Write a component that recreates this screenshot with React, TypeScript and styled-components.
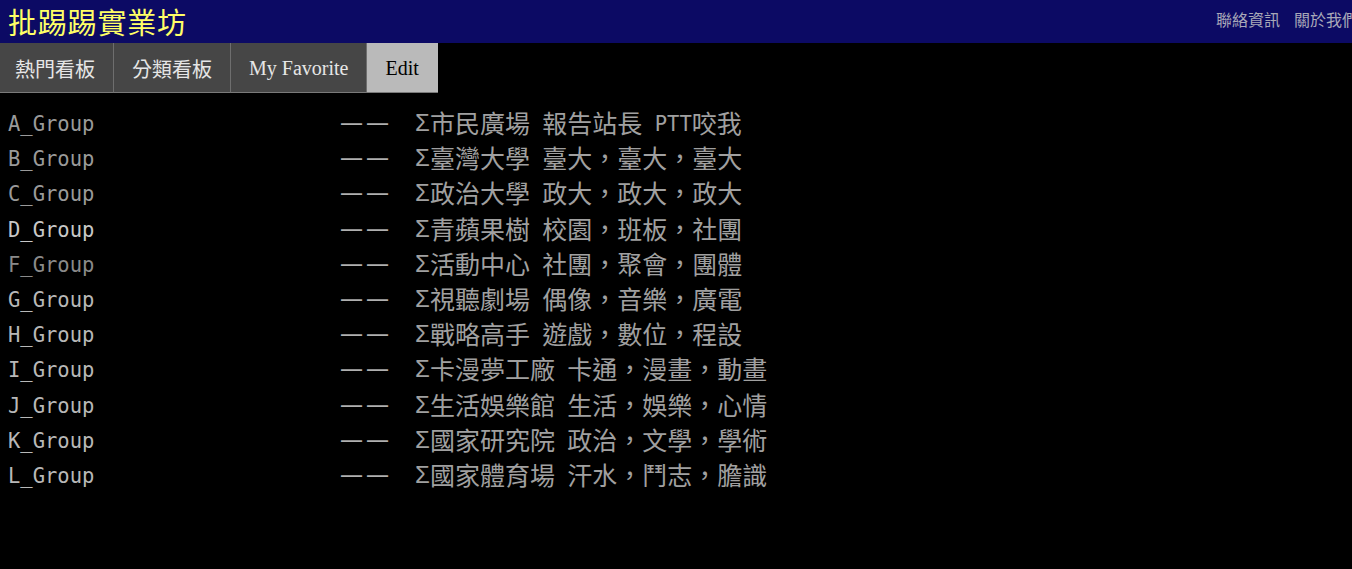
import React from 'react';
import styled, {createGlobalStyle} from 'styled-components';

const Global = createGlobalStyle`
  html, body {
    margin: 0;
    padding: 0;
    background: #000;
    overflow: hidden;
  }
`;

interface Board {
  name : string;
  desc : string;
  color : string;
}

const boards : Board[] = [
  {name: 'A_Group', desc: '市民廣場 報告站長 PTT咬我', color: '#9a9a9a'},
  {name: 'B_Group', desc: '臺灣大學 臺大，臺大，臺大', color: '#9a9a9a'},
  {name: 'C_Group', desc: '政治大學 政大，政大，政大', color: '#9a9a9a'},
  {name: 'D_Group', desc: '青蘋果樹 校園，班板，社團', color: '#c8c8c8'},
  {name: 'F_Group', desc: '活動中心 社團，聚會，團體', color: '#8a8a8a'},
  {name: 'G_Group', desc: '視聽劇場 偶像，音樂，廣電', color: '#b8b8b8'},
  {name: 'H_Group', desc: '戰略高手 遊戲，數位，程設', color: '#b8b8b8'},
  {name: 'I_Group', desc: '卡漫夢工廠 卡通，漫畫，動畫', color: '#b8b8b8'},
  {name: 'J_Group', desc: '生活娛樂館 生活，娛樂，心情', color: '#b8b8b8'},
  {name: 'K_Group', desc: '國家研究院 政治，文學，學術', color: '#b8b8b8'},
  {name: 'L_Group', desc: '國家體育場 汗水，鬥志，膽識', color: '#b8b8b8'},
];

const tabs = ['熱門看板', '分類看板', 'My Favorite', 'Edit'];

const S = {
  Header : styled.header`
    display: flex;
    align-items: center;
    justify-content: space-between;
    height: 43px;
    padding-left: 8px;
    background: #0c0a64;
    overflow: hidden;
  `,
  Title : styled.h1`
    margin: 0;
    font-family: "Noto Sans CJK TC", sans-serif;
    font-size: 29px;
    font-weight: 400;
    line-height: 1;
    color: #ffff66;
    letter-spacing: 0.8px;
  `,
  Nav : styled.nav`
    display: flex;
    gap: 14px;
    margin-right: -6px;
    margin-top: -6px;
  `,
  NavLink : styled.a`
    font-family: "Noto Sans CJK TC", sans-serif;
    font-size: 16px;
    color: #a8a8b8;
    white-space: nowrap;
  `,
  TabBar : styled.div`
    display: flex;
    height: 50px;
  `,
  Tab : styled.div<{$active? : boolean}>`
    display: flex;
    align-items: center;
    padding: 2px 18px 0 18px;
    background: ${p => p.$active ? '#bababa' : '#464646'};
    color: ${p => p.$active ? '#000' : '#e6e6e6'};
    border-right: 1px solid #6e6e6e;
    border-bottom: 1px solid #7a7a7a;
    font-family: "Liberation Serif", "Noto Sans CJK TC", serif;
    font-size: 20px;
    box-sizing: border-box;
    &:first-child {
      padding-left: 15px;
    }
    &:last-child {
      border-right: none;
      padding-right: 19px;
    }
  `,
  List : styled.div`
    padding: 12px 0 0 8px;
  `,
  Row : styled.div<{$color : string}>`
    display: grid;
    grid-template-columns: 332px 75px 1fr;
    height: 35.2px;
    align-items: baseline;
    line-height: 35px;
    color: ${p => p.$color};
    font-family: "DejaVu Sans Mono", monospace;
    font-size: 20.5px;
    white-space: pre;
  `,
  Line : styled.span`
    font-family: "Noto Sans CJK TC", sans-serif;
    font-size: 23px;
    letter-spacing: 3px;
    color: #b0b0b0;
    vertical-align: -2px;
  `,
  Desc : styled.span`
    color: #a0a0a0;
  `,
  Sigma : styled.span`
    display: inline-block;
    width: 15px;
    font-family: "Liberation Sans", sans-serif;
    font-size: 24px;
  `,
  Wide : styled.span`
    font-family: "Noto Sans CJK TC", sans-serif;
    font-size: 25px;
    vertical-align: -2px;
  `,
};

const Mixed : React.FC<{text : string}> = ({text}) => {
  const parts = text.split(/([\u2E80-\u9FFF\uFF00-\uFFEF]+)/);
  return (
    <>
      {parts.map((p, i) => i % 2 === 1
        ? <S.Wide key={i}>{p}</S.Wide>
        : <React.Fragment key={i}>{p}</React.Fragment>)}
    </>
  );
};

const App : React.FC = () => {
  return (
    <>
      <Global/>
      <S.Header>
        <S.Title>批踢踢實業坊</S.Title>
        <S.Nav>
          <S.NavLink>聯絡資訊</S.NavLink>
          <S.NavLink>關於我們</S.NavLink>
        </S.Nav>
      </S.Header>
      <S.TabBar>
        {tabs.map(t => <S.Tab key={t} $active={t === 'Edit'}>{t}</S.Tab>)}
      </S.TabBar>
      <S.List>
        {boards.map(b => (
          <S.Row key={b.name} $color={b.color}>
            <span>{b.name}</span>
            <span><S.Line>一一</S.Line></span>
            <S.Desc><S.Sigma>Σ</S.Sigma><Mixed text={b.desc}/></S.Desc>
          </S.Row>
        ))}
      </S.List>
    </>
  );
};

export default App;
